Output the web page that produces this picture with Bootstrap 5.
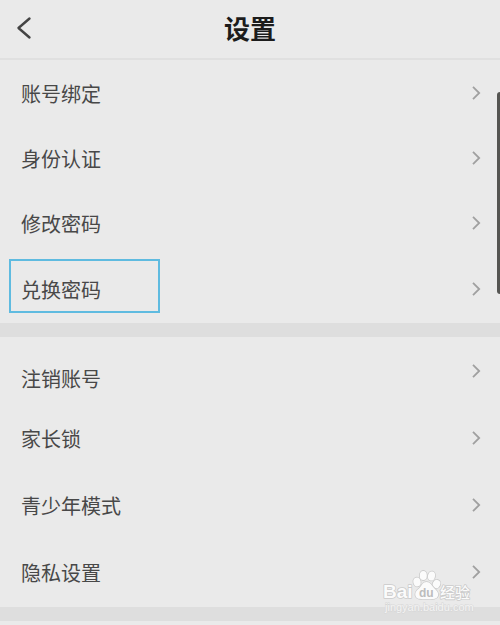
<!DOCTYPE html>
<html lang="zh-CN">
<head>
<meta charset="utf-8">
<meta name="viewport" content="width=device-width, initial-scale=1">
<title>设置</title>
<link href="https://cdn.jsdelivr.net/npm/bootstrap@5.3.0/dist/css/bootstrap.min.css" rel="stylesheet">
<style>
body { background: #eaeaea; color: #484848; font-family: "Noto Sans CJK SC", sans-serif; font-size: 20px; line-height: 30px; }
.screen { min-height: 100vh; }
.topbar { height: 60px; border-bottom: 2px solid #e0e0e0; padding-bottom: 3px; }
.topbar h1 { font-size: 26px; line-height: 36px; color: #1c1c1c; }
.back { left: 12px; color: #444; line-height: 0; }
.setting { min-height: 65px; padding: 0 18px 0 21px; color: inherit; }
.setting-end { min-height: 68px; }
.setting-label { padding-top: 2px; }
.setting-label-low { padding-top: 16px; }
.roomy .setting { min-height: 67px; }
.roomy { min-height: 270px; }
.chev { width: 12px; height: 16px; color: #a0a0a0; }
.separator { height: 14px; background: #dedede; }
.marker { left: 9px; top: 4px; width: 151px; height: 54px; border: 2px solid #5fbbe0; }
.thumb { right: 0; top: 92px; width: 3px; height: 202px; background: #555552; border-radius: 3px 0 0 3px; }
.watermark { left: 380px; top: 568px; width: 96px; height: 48px; }
</style>
</head>
<body>
<div class="screen position-relative d-flex flex-column overflow-hidden">
  <header class="topbar position-relative d-flex align-items-center justify-content-center">
    <button type="button" class="back btn border-0 p-1 position-absolute" aria-label="返回">
      <svg width="18" height="24" viewBox="0 0 18 24" fill="none" stroke="currentColor" stroke-width="2.4" stroke-linecap="round" stroke-linejoin="round"><path d="M13.500 2.500 2.500 12l11 9.500"/></svg>
    </button>
    <h1 class="m-0 fw-bold">设置</h1>
  </header>
  <main>
    <nav class="d-flex flex-column" aria-label="账号">
      <a href="#" class="setting d-flex align-items-center justify-content-between text-decoration-none"><span class="setting-label">账号绑定</span><svg class="chev" viewBox="0 0 12 16" fill="none" stroke="currentColor" stroke-width="1.8"><path d="M3 1.8 9.2 8 3 14.2"/></svg></a>
      <a href="#" class="setting d-flex align-items-center justify-content-between text-decoration-none"><span class="setting-label">身份认证</span><svg class="chev" viewBox="0 0 12 16" fill="none" stroke="currentColor" stroke-width="1.8"><path d="M3 1.8 9.2 8 3 14.2"/></svg></a>
      <a href="#" class="setting d-flex align-items-center justify-content-between text-decoration-none"><span class="setting-label">修改密码</span><svg class="chev" viewBox="0 0 12 16" fill="none" stroke="currentColor" stroke-width="1.8"><path d="M3 1.8 9.2 8 3 14.2"/></svg></a>
      <a href="#" class="setting setting-end position-relative d-flex align-items-center justify-content-between text-decoration-none"><span class="marker position-absolute"></span><span class="setting-label">兑换密码</span><svg class="chev" viewBox="0 0 12 16" fill="none" stroke="currentColor" stroke-width="1.8"><path d="M3 1.8 9.2 8 3 14.2"/></svg></a>
    </nav>
    <div class="separator"></div>
    <nav class="roomy d-flex flex-column" aria-label="隐私">
      <a href="#" class="setting d-flex align-items-center justify-content-between text-decoration-none"><span class="setting-label setting-label-low">注销账号</span><svg class="chev" viewBox="0 0 12 16" fill="none" stroke="currentColor" stroke-width="1.8"><path d="M3 1.8 9.2 8 3 14.2"/></svg></a>
      <a href="#" class="setting d-flex align-items-center justify-content-between text-decoration-none"><span class="setting-label">家长锁</span><svg class="chev" viewBox="0 0 12 16" fill="none" stroke="currentColor" stroke-width="1.8"><path d="M3 1.8 9.2 8 3 14.2"/></svg></a>
      <a href="#" class="setting d-flex align-items-center justify-content-between text-decoration-none"><span class="setting-label">青少年模式</span><svg class="chev" viewBox="0 0 12 16" fill="none" stroke="currentColor" stroke-width="1.8"><path d="M3 1.8 9.2 8 3 14.2"/></svg></a>
      <a href="#" class="setting d-flex align-items-center justify-content-between text-decoration-none"><span class="setting-label">隐私设置</span><svg class="chev" viewBox="0 0 12 16" fill="none" stroke="currentColor" stroke-width="1.8"><path d="M3 1.8 9.2 8 3 14.2"/></svg></a>
    </nav>
    <div class="separator"></div>
  </main>
  <div class="thumb position-absolute"></div>
  <svg class="watermark position-absolute pe-none" viewBox="0 0 96 48" aria-label="Baidu 经验">
    <g fill="#fbfbfb" stroke="#cacaca" stroke-width="1.6" paint-order="stroke" stroke-linejoin="round">
      <text x="3" y="30" font-family="Liberation Sans, sans-serif" font-weight="700" font-size="19">Bai</text>
      <text x="60" y="30" font-family="Noto Sans CJK SC, sans-serif" font-weight="500" font-size="15">经验</text>
      <ellipse cx="37" cy="14" rx="3.600" ry="4.400" transform="rotate(-12 37 14)"/>
      <ellipse cx="43.300" cy="7.500" rx="3.500" ry="4.600"/>
      <ellipse cx="51.500" cy="8" rx="3.500" ry="4.600" transform="rotate(12 51.5 8)"/>
      <ellipse cx="56.500" cy="16" rx="3.700" ry="4.200" transform="rotate(25 56.5 16)"/>
      <path d="M46.500 14c-4 0-4.500 3.500-7 6-3 2.500-4.800 4.500-4 7.800 1 3.700 5.500 3.400 11 3.400s10.500.3 11.500-3.400c.9-3.300-1.500-5.300-4-7.800s-3.500-6-7.500-6z"/>
    </g>
    <text x="39" y="29" fill="#bdbdbd" font-family="Liberation Sans, sans-serif" font-weight="700" font-size="12">du</text>
    <text x="5" y="43" fill="#f4f4f4" stroke="#d6d6d6" stroke-width="1" paint-order="stroke" font-family="Liberation Sans, sans-serif" font-size="11">jingyan.baidu.com</text>
  </svg>
</div>
<script src="https://cdn.jsdelivr.net/npm/bootstrap@5.3.0/dist/js/bootstrap.bundle.min.js"></script>
</body>
</html>
